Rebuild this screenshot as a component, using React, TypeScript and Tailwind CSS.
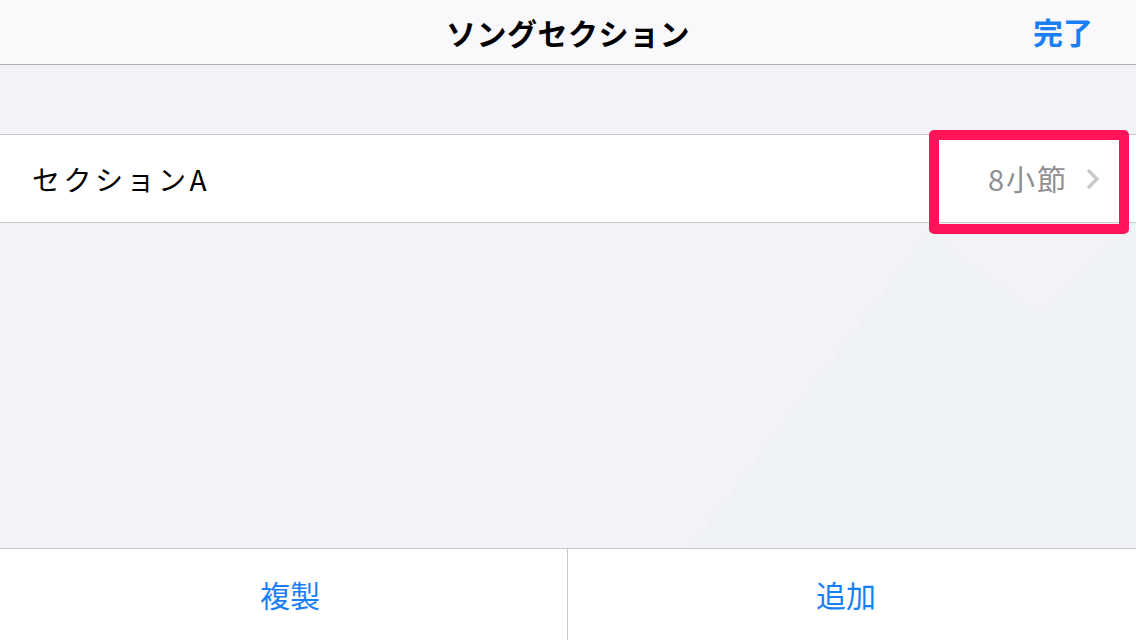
import React from 'react'

const font = { fontFamily: '"Noto Sans CJK JP", "Noto Sans", sans-serif' }

export default function App() {
  return (
    <div className="relative w-[1136px] h-[640px] overflow-hidden bg-[#f2f2f7] flex flex-col" style={font}>
      {/* nav bar */}
      <div className="h-[65px] shrink-0 bg-[#f9f9fb] border-b border-[#b2b2b2] flex items-center relative">
        <div className="flex-1 text-center text-[30px] font-bold text-black tracking-[0.5px]">ソングセクション</div>
        <div className="absolute right-[43px] top-[9px] text-[30px] font-bold text-[#1a7ff5]">完了</div>
      </div>

      <div className="h-[69px] shrink-0" />

      {/* row */}
      <div className="h-[89px] shrink-0 bg-white border-y border-[#c8c7cc] flex items-center pl-[32px] pr-[36px]">
        <div className="flex-1 text-[28px] text-black tracking-[3.5px]">セクションA</div>
        <div className="text-[29px] text-[#8e8e93] tracking-[2px] mr-[18px]">8小節</div>
        <svg width="14" height="22" viewBox="0 0 14 22">
          <path d="M2 2 L11 11 L2 20" fill="none" stroke="#c7c7cc" strokeWidth="3.2" />
        </svg>
      </div>

      <div className="flex-1 relative">
        <svg className="absolute inset-0" width="1136" height="325" viewBox="0 223 1136 325">
          <polygon points="690,548 928,235 1038,315 1125,233 1136,233 1136,548" fill="#eef2f4" />
        </svg>
      </div>

      {/* toolbar */}
      <div className="h-[92px] shrink-0 bg-white border-t border-[#c8c7cc] flex">
        <div className="w-[568px] border-r border-[#c8c7cc] flex items-center justify-center text-[30px] text-[#1a7ff5] pl-[13px]">複製</div>
        <div className="flex-1 flex items-center justify-center text-[30px] text-[#1a7ff5] pr-[12px]">追加</div>
      </div>

      {/* highlight */}
      <div className="absolute left-[929px] top-[130px] w-[200px] h-[104px] border-[10px] border-[#ff1459] rounded-[5px]" />
    </div>
  )
}
